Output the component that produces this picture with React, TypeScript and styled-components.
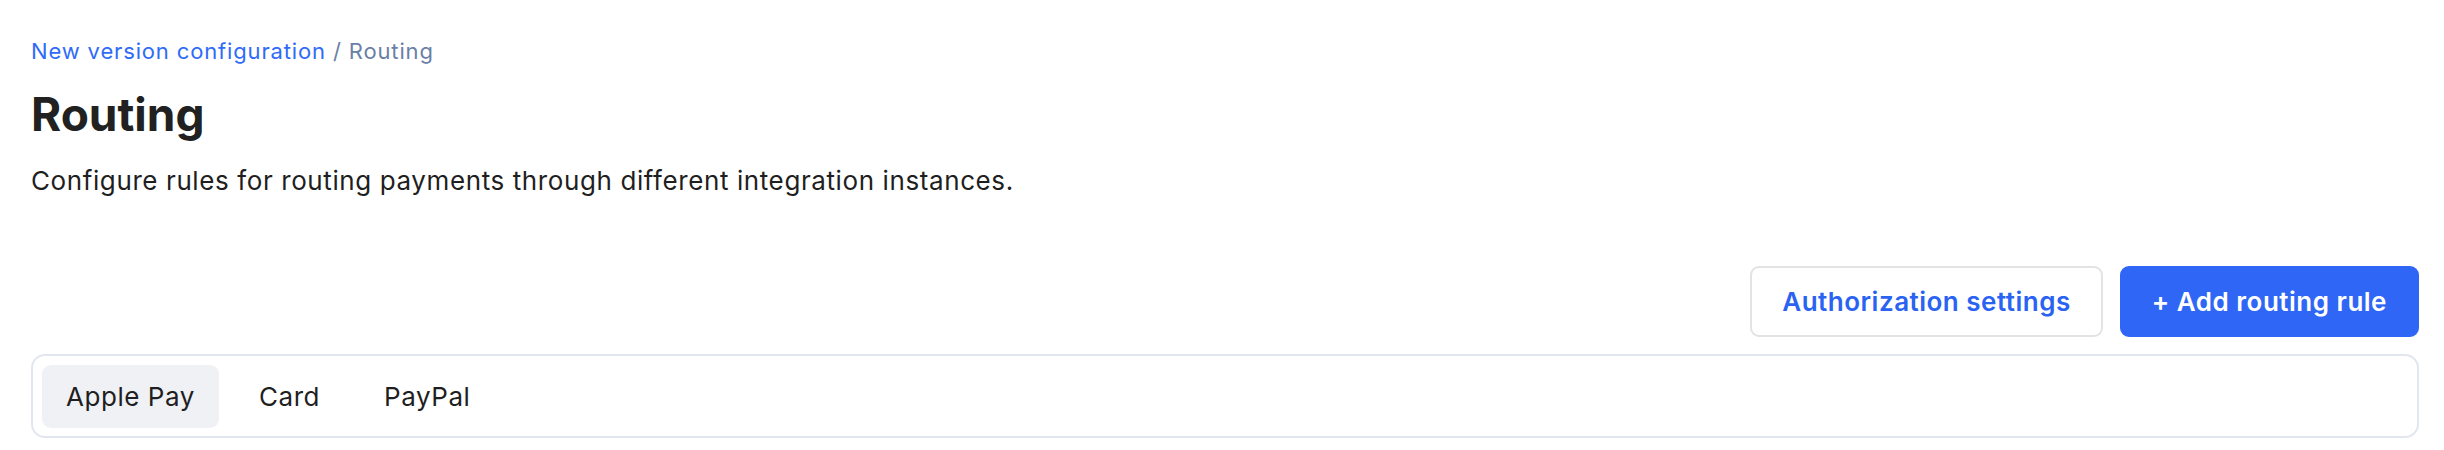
import React, { useState } from "react";
import styled, { createGlobalStyle } from "styled-components";

const GlobalStyle = createGlobalStyle`
  html, body {
    margin: 0;
    padding: 0;
    background: #ffffff;
  }
  body {
    font-family: Inter, "Noto Sans", "Liberation Sans", sans-serif;
    color: #1f1f1f;
  }
  * { box-sizing: border-box; }
`;

const Page = styled.div`
  display: flex;
  flex-direction: column;
  padding: 36px 25px 0 31px;
`;

const Breadcrumb = styled.nav`
  font-size: 22px;
  line-height: 30px;
  letter-spacing: 0.85px;
  color: #6b7fa6;
`;

const CrumbLink = styled.a`
  color: #2f6bf7;
  text-decoration: none;
`;

const Title = styled.h1`
  margin: 21px 0 0;
  font-size: 46px;
  line-height: 54px;
  font-weight: 700;
  color: #212121;
  letter-spacing: 0;
`;

const Description = styled.p`
  margin: 22px 0 0;
  font-size: 26px;
  line-height: 36px;
  letter-spacing: 0.6px;
  color: #1f1f1f;
`;

const Actions = styled.div`
  display: flex;
  justify-content: flex-end;
  gap: 17px;
  margin-top: 67px;
`;

const Button = styled.button<{ $primary?: boolean }>`
  height: 71px;
  padding: 0 30px;
  border-radius: 9px;
  font-family: inherit;
  font-size: 26px;
  font-weight: 600;
  letter-spacing: 0.5px;
  cursor: pointer;
  border: 2px solid ${(p) => (p.$primary ? "#2f66f6" : "#e3e3e3")};
  background: ${(p) => (p.$primary ? "#2f66f6" : "#ffffff")};
  color: ${(p) => (p.$primary ? "#ffffff" : "#2a63f2")};
`;

const TabBar = styled.div`
  display: flex;
  align-items: center;
  gap: 16px;
  margin-top: 17px;
  height: 84px;
  padding: 0 9px;
  border: 2px solid #e2e6ee;
  border-radius: 14px;
`;

const Tab = styled.button<{ $active?: boolean }>`
  height: 63px;
  padding: 0 24px;
  border: none;
  border-radius: 9px;
  font-family: inherit;
  font-size: 26px;
  font-weight: 400;
  letter-spacing: 0.55px;
  color: #1f1f1f;
  cursor: pointer;
  background: ${(p) => (p.$active ? "#f0f1f5" : "transparent")};
`;

const tabs = ["Apple Pay", "Card", "PayPal"];

export default function App() {
  const [active, setActive] = useState("Apple Pay");
  return (
    <>
      <GlobalStyle />
      <Page>
        <Breadcrumb>
          <CrumbLink href="#">New version configuration</CrumbLink> / Routing
        </Breadcrumb>
        <Title>Routing</Title>
        <Description>
          Configure rules for routing payments through different integration instances.
        </Description>
        <Actions>
          <Button>Authorization settings</Button>
          <Button $primary>+ Add routing rule</Button>
        </Actions>
        <TabBar>
          {tabs.map((t) => (
            <Tab key={t} $active={t === active} onClick={() => setActive(t)}>
              {t}
            </Tab>
          ))}
        </TabBar>
      </Page>
    </>
  );
}
